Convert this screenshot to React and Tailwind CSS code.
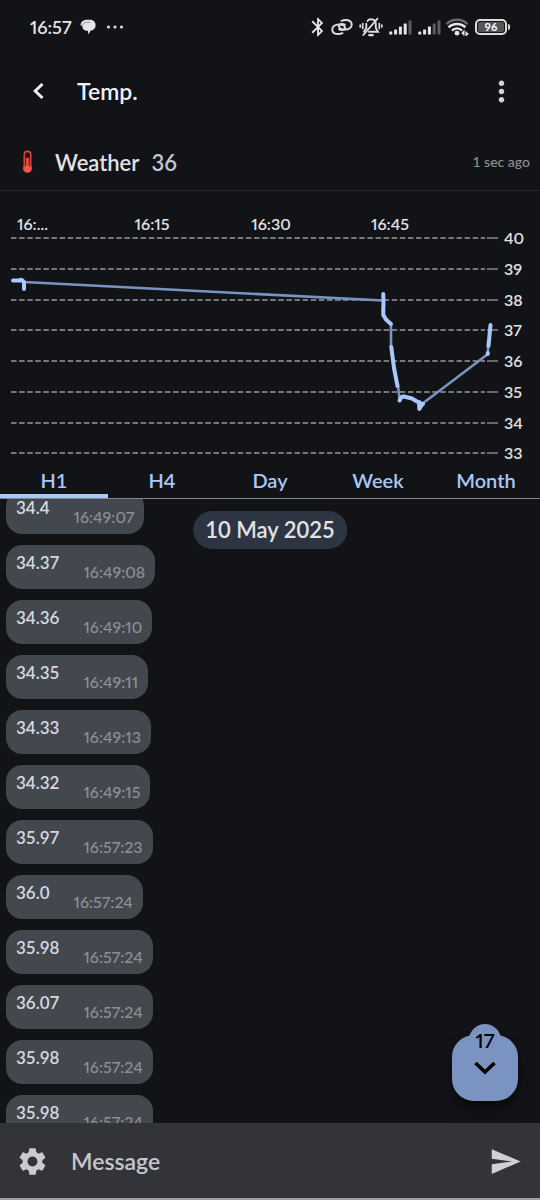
import { MdBluetooth, MdSettings, MdSend, MdMoreVert } from "react-icons/md";

const readings = [
  ["34.4", "16:49:07"],
  ["34.37", "16:49:08"],
  ["34.36", "16:49:10"],
  ["34.35", "16:49:11"],
  ["34.33", "16:49:13"],
  ["34.32", "16:49:15"],
  ["35.97", "16:57:23"],
  ["36.0", "16:57:24"],
  ["35.98", "16:57:24"],
  ["36.07", "16:57:24"],
  ["35.98", "16:57:24"],
  ["35.98", "16:57:24"],
];

const ranges = ["H1", "H4", "Day", "Week", "Month"];

const gridLines = [
  [40, 47],
  [39, 78],
  [38, 109],
  [37, 139],
  [36, 170],
  [35, 201],
  [34, 232],
  [33, 262],
];

function ChatIcon() {
  return (
    <svg className="h-4 w-4" viewBox="0 0 16 16" aria-hidden="true">
      <path d="M7 .8h3c3.500 0 5.600 2.400 5.600 5.500 0 3.100-2.400 5.300-5.200 5.500L8.600 15.600l-.8-3.800H7C4 11.800 2.400 10 2.400 7.500V6.500L.6 6.800C.4 3 3.200.8 7 .8z" fill="#e6e6e8" />
      <path d="M2.600 6.400c.4-2 1.900-3.100 4.200-3.100h3.600" fill="none" stroke="#85868a" strokeWidth="0.8" />
    </svg>
  );
}

function LinkIcon() {
  return (
    <svg className="h-5 w-[22px]" viewBox="0 0 22 20" fill="none" stroke="#dcdcde" strokeWidth="2" strokeLinecap="round" aria-hidden="true">
      <path d="M11.500 16.200c-1.200.5-2.500.8-4 .8C3.700 17 1.300 15.200 1.300 12.400c0-3 2.700-5 6.700-5 3.600 0 6 1.400 6 3.400 0 1.300-1.100 2.200-3 2.200-1 0-2-.2-2.800-.6" />
      <path d="M10.500 3.800c1.200-.5 2.500-.8 4-.8 3.800 0 6.200 1.800 6.200 4.600 0 3-2.700 5-6.700 5-3.600 0-6-1.400-6-3.400C8 7.900 9.100 7 11 7c1 0 2 .2 2.800.6" />
    </svg>
  );
}

function MutedBellIcon() {
  return (
    <svg className="h-5 w-6" viewBox="0 0 24 20" fill="none" stroke="#dcdcde" strokeWidth="1.900" strokeLinecap="round" aria-hidden="true">
      <path d="M8.500 4C9.300 2.800 10.500 2.200 12 2.200c3 0 4.800 2.200 4.800 5.300v3.600l2.200 3.700H10" />
      <path d="M7.300 6.800V11L5 14.800" />
      <path d="M4.300 18 18.500 1.700" />
      <path d="M10.200 18.200h3.600" strokeWidth="2.200" />
      <path d="M3.700 6.500v5M1.200 8v2M20.300 6.500v5M22.800 8v2" strokeWidth="1.700" />
    </svg>
  );
}

function SignalIcon({ bars }) {
  return (
    <svg className="h-4 w-[23px]" viewBox="0 0 23 16" aria-hidden="true">
      {[3, 5, 8, 11, 14].map((h, i) => (
        <rect key={h} x={i * 4.8 + 0.3} y={15.5 - h} width="3" height={h} rx="0.6" fill={i < bars ? "#e6e6e8" : "#5b5c60"} />
      ))}
    </svg>
  );
}

function WifiIcon() {
  return (
    <svg className="h-[18px] w-6" viewBox="0 0 24 18" fill="none" aria-hidden="true">
      <path d="M1.500 6.200C4.200 3.200 7.800 1.800 12 1.800s7.800 1.400 10.500 4.400" stroke="#6b6c70" strokeWidth="2.400" />
      <path d="M3.600 9.300C5.900 7 8.700 6 12 6s6.100 1 8.400 3.300" stroke="#e6e6e8" strokeWidth="2.500" />
      <path d="M7 12.600C8.400 11.100 10.100 10.400 12 10.400s3.600.7 5 2.200" stroke="#e6e6e8" strokeWidth="2.400" />
      <circle cx="12" cy="15.200" r="2.400" fill="#e6e6e8" />
      <path d="M18.800 17.500v-4l-2 2.500M21.200 13.500v4l2-2.500" stroke="#e6e6e8" strokeWidth="1.500" />
    </svg>
  );
}

function StatusBar() {
  return (
    <div className="flex h-[54px] shrink-0 items-center pr-[30px] pl-[30px] text-[#e6e6e8]">
      <span className="text-lg font-semibold proportional-nums">16:57</span>
      <span className="ml-2">
        <ChatIcon />
      </span>
      <svg className="ml-2.5 h-1 w-[18px]" viewBox="0 0 18 4" fill="#dcdcde" aria-hidden="true">
        <circle cx="2.500" cy="2" r="1.600" />
        <circle cx="9" cy="2" r="1.600" />
        <circle cx="15.500" cy="2" r="1.600" />
      </svg>
      <div className="ml-auto flex items-center">
        <MdBluetooth className="size-[22px]" aria-hidden="true" />
        <span className="ml-0.5"><LinkIcon /></span>
        <span className="ml-1.5"><MutedBellIcon /></span>
        <span className="ml-1.5"><SignalIcon bars={4} /></span>
        <span className="ml-1.5"><SignalIcon bars={3} /></span>
        <span className="ml-1"><WifiIcon /></span>
        <div className="ml-1.5 flex h-4 w-8 items-center justify-center rounded-[5px] border-2 border-[#dcdcde] p-px">
          <span className="w-full rounded-xs bg-[#55565a] text-center text-[11px] leading-[10px] font-bold text-white">96</span>
        </div>
        <div className="ml-px h-1.5 w-0.5 rounded-r-sm bg-[#dcdcde]" />
      </div>
    </div>
  );
}

function Thermometer() {
  return (
    <svg className="h-6 w-[11px]" viewBox="0 0 11 24" aria-hidden="true">
      <path d="M1.500 4.500a4 4 0 0 1 8 0V16a4.600 4.600 0 1 1-8 0z" fill="#e5453d" />
      <path d="M2.900 4.500a2.600 2.600 0 0 1 5.200 0V16H2.900z" fill="#6d2023" />
      <rect x="3.200" y="3" width="4.600" height="4.500" rx="1.500" fill="#15161a" />
      <path d="M5.500 8v10" stroke="#f04f43" strokeWidth="2.600" />
      <circle cx="5.500" cy="19" r="3.200" fill="#f2584b" />
    </svg>
  );
}

function Chart() {
  return (
    <svg className="block w-full shrink-0" viewBox="0 0 540 276" role="img" aria-label="Temperature over the last hour">
      <g fill="#e2e2e6" fontSize="16" className="font-semibold proportional-nums">
        <text x="17" y="39">16:...</text>
        <text x="152" y="39" textAnchor="middle">16:15</text>
        <text x="271" y="39" textAnchor="middle">16:30</text>
        <text x="390" y="39" textAnchor="middle">16:45</text>
        {gridLines.map(([label, y]) => (
          <text key={label} x="504" y={y + 6}>{label}</text>
        ))}
      </g>
      <g stroke="#98999c" strokeWidth="1.300">
        {gridLines.map(([label, y]) => (
          <g key={label}>
            <path d={`M11 ${y}H485`} strokeDasharray="5.500 2.600" />
            <path d={`M487 ${y}H498`} />
          </g>
        ))}
      </g>
      <g fill="none" stroke="#7b93c4" strokeWidth="2.600" strokeLinejoin="round">
        <path d="M24 91 383 109.500M383.500 104V125M391 133V156M398 194 399.500 209M422 213 488 163V151" />
      </g>
      <g fill="none" stroke="#a8c7fa" strokeWidth="4" strokeLinejoin="round" strokeLinecap="round">
        <path d="M13 89.500H19L21.500 88.800 24 91V98" />
        <path d="M383.300 103V107M383.500 108V115M383.300 115V124L386 128.500 391 133" />
        <path d="M391.300 156 394 177 397.500 195M399.500 209.500 401.500 206 404 205.500 412 207.500 417 210.500 423 213" />
        <path d="M419 211 419.300 218 422.500 213" />
        <path d="M487.700 163V162M488.500 155 490.500 134" />
      </g>
    </svg>
  );
}

export default function App() {
  return (
    <main className="flex h-screen flex-col overflow-hidden bg-[#111317] font-['Lato',sans-serif] text-[#e2e2e6]">
      <StatusBar />

      <header className="flex h-[74px] shrink-0 items-center pr-[25px] pl-[25px]">
        <button type="button" aria-label="Back" className="flex size-[26px] items-center justify-center">
          <svg className="h-[18px] w-3" viewBox="0 0 12 18" fill="none" stroke="#f0f0f3" strokeWidth="3" aria-hidden="true">
            <path d="M10.500 2 3.200 9l7.300 7" />
          </svg>
        </button>
        <h1 className="ml-[26px] text-[23px] font-semibold text-[#f0f0f3]">Temp.</h1>
        <button type="button" aria-label="More options" className="ml-auto flex size-7 items-center justify-center">
          <MdMoreVert className="size-[33px] shrink-0 text-[#d4d4d8]" aria-hidden="true" />
        </button>
      </header>

      <section className="flex h-[63px] shrink-0 items-center border-b border-[#27282c] pt-1.5 pr-2.5 pl-[22px]">
        <Thermometer />
        <h2 className="ml-[22px] text-[22px] font-semibold">Weather</h2>
        <span className="ml-3 text-[22px] font-semibold text-[#c4c6d0]">36</span>
        <span className="ml-auto text-sm font-medium text-[#8f9094]">1 sec ago</span>
      </section>

      <Chart />

      <nav className="flex h-8 shrink-0 border-b border-[#85868a]" aria-label="Time range">
        {ranges.map((range, i) => (
          <button
            key={range}
            type="button"
            aria-pressed={i === 0}
            className={`flex-1 pb-0.5 text-xl leading-6 font-semibold text-[#a8c7fa] ${i === 0 ? "border-b-4 border-[#a8c7fa]" : "border-b-4 border-transparent"}`}
          >
            {range}
          </button>
        ))}
      </nav>

      <section className="relative min-h-0 flex-1 overflow-hidden" aria-label="Readings">
        <ul className="-mt-[9px] flex flex-col items-start gap-[11px] pl-1.5">
          {readings.map(([value, time], i) => (
            <li key={i} className="flex h-11 gap-6 rounded-2xl bg-[#43474e] pt-[9px] pr-2.5 pl-2.5">
              <span className="text-[17px] leading-[18px] font-semibold text-[#d5d8e0]">{value}</span>
              <time className="pt-[9px] text-base leading-[18px] font-medium text-[#8c9097] proportional-nums">{time}</time>
            </li>
          ))}
        </ul>
        <div className="absolute top-3 left-1/2 -translate-x-1/2 rounded-full bg-[#2e3542] px-3 py-1 text-[22px] leading-[30px] font-semibold whitespace-nowrap">
          10 May 2025
        </div>
        <button
          type="button"
          aria-label="Jump to latest, 17 new"
          className="absolute right-[22px] bottom-[22px] flex size-[66px] items-center justify-center rounded-[22px] bg-[#7b93c0] text-black shadow-lg shadow-black/50"
        >
          <span className="absolute -top-[11px] flex size-8 items-center justify-center rounded-full bg-[#7b93c0] text-xl font-semibold proportional-nums">17</span>
          <svg className="relative h-3.5 w-6" viewBox="0 0 24 14" fill="none" stroke="currentColor" strokeWidth="3.600" aria-hidden="true">
            <path d="M2.500 2 12 11l9.500-9" />
          </svg>
        </button>
      </section>

      <form className="flex h-[77px] shrink-0 items-center border-b-2 border-[#a0a0a2] bg-[#333438] pt-0.5 pr-[18px] pl-4" onSubmit={(e) => e.preventDefault()}>
        <button type="button" aria-label="Settings">
          <MdSettings className="size-[33px] text-[#c9cad2]" aria-hidden="true" />
        </button>
        <input
          type="text"
          aria-label="Message"
          placeholder="Message"
          className="ml-[22px] min-w-0 flex-1 bg-transparent text-[23px] font-semibold outline-none placeholder:text-[#c4c6d0]"
        />
        <button type="submit" aria-label="Send">
          <MdSend className="size-[33px] text-[#d0d1d8]" aria-hidden="true" />
        </button>
      </form>
    </main>
  );
}
